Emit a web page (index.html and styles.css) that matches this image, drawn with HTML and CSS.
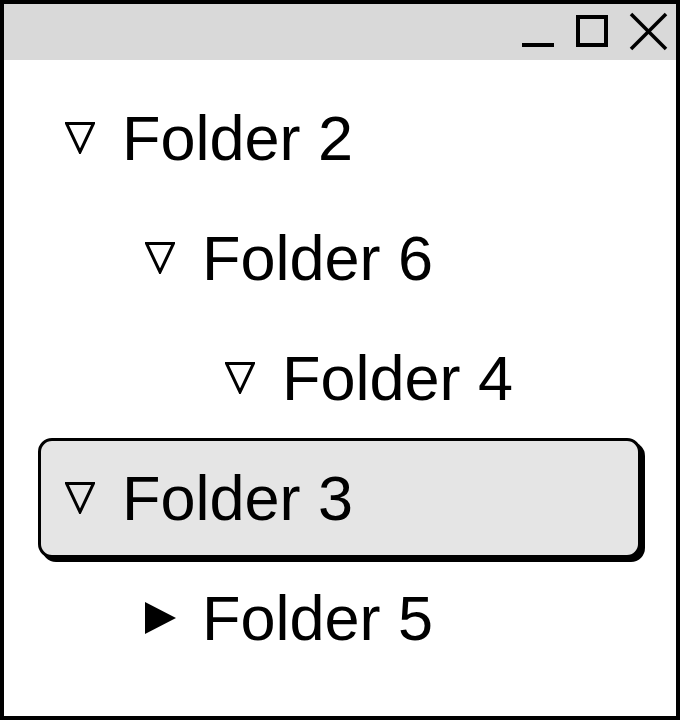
FILE: index.html
```html
<!DOCTYPE html>
<html>
<head>
<meta charset="utf-8">
<link rel="stylesheet" href="styles.css">
</head>
<body>
<div class="window">
  <div class="titlebar">
    <svg class="controls" width="160" height="56" viewBox="0 0 160 56">
      <rect x="6" y="39" width="32" height="4" fill="#000"/>
      <rect x="62" y="13" width="28" height="28" fill="none" stroke="#000" stroke-width="4"/>
      <line x1="115" y1="10" x2="150" y2="45" stroke="#000" stroke-width="3.5"/>
      <line x1="150" y1="10" x2="115" y2="45" stroke="#000" stroke-width="3.5"/>
    </svg>
  </div>
  <ul class="tree">
    <li class="row level-0">
      <svg class="tri" width="30" height="32" viewBox="0 0 30 32"><polygon points="1.5,1.5 28.5,1.5 15,30" fill="none" stroke="#000" stroke-width="3"/></svg>
      <span class="label">Folder 2</span>
    </li>
    <li class="row level-1">
      <svg class="tri" width="30" height="32" viewBox="0 0 30 32"><polygon points="1.5,1.5 28.5,1.5 15,30" fill="none" stroke="#000" stroke-width="3"/></svg>
      <span class="label">Folder 6</span>
    </li>
    <li class="row level-2">
      <svg class="tri" width="30" height="32" viewBox="0 0 30 32"><polygon points="1.5,1.5 28.5,1.5 15,30" fill="none" stroke="#000" stroke-width="3"/></svg>
      <span class="label">Folder 4</span>
    </li>
    <li class="row level-0 selected">
      <svg class="tri" width="30" height="32" viewBox="0 0 30 32"><polygon points="1.5,1.5 28.5,1.5 15,30" fill="none" stroke="#000" stroke-width="3"/></svg>
      <span class="label">Folder 3</span>
    </li>
    <li class="row level-1">
      <svg class="tri collapsed" width="31" height="32" viewBox="0 0 31 32"><polygon points="0,0 31,16 0,32" fill="#000"/></svg>
      <span class="label">Folder 5</span>
    </li>
  </ul>
</div>
</body>
</html>
```
FILE: styles.css
```css
html, body {
  margin: 0;
  padding: 0;
  background: #fff;
}

.window {
  box-sizing: border-box;
  width: 680px;
  height: 720px;
  border: 4px solid #000;
  background: #fff;
  font-family: "Liberation Sans", Arial, sans-serif;
  color: #000;
  overflow: hidden;
}

.titlebar {
  height: 56px;
  background: #d9d9d9;
  display: flex;
  justify-content: flex-end;
}

.controls {
  display: block;
}

.tree {
  list-style: none;
  margin: 0;
  padding: 18px 0 0 0;
}

.row {
  box-sizing: border-box;
  height: 120px;
  width: 603px;
  margin-left: 34px;
  border: 3px solid transparent;
  border-radius: 14px;
  display: flex;
  align-items: center;
  font-size: 63px;
}

.row .tri {
  display: block;
  flex: none;
  margin-right: 27px;
}

.row .tri.collapsed {
  margin-right: 26px;
}

.level-0 { padding-left: 24px; }
.level-1 { padding-left: 104px; }
.level-2 { padding-left: 184px; }

.selected {
  background: #e5e5e5;
  border-color: #000;
  box-shadow: 4px 4px 0 #000;
}

.label {
  white-space: nowrap;
}
```
